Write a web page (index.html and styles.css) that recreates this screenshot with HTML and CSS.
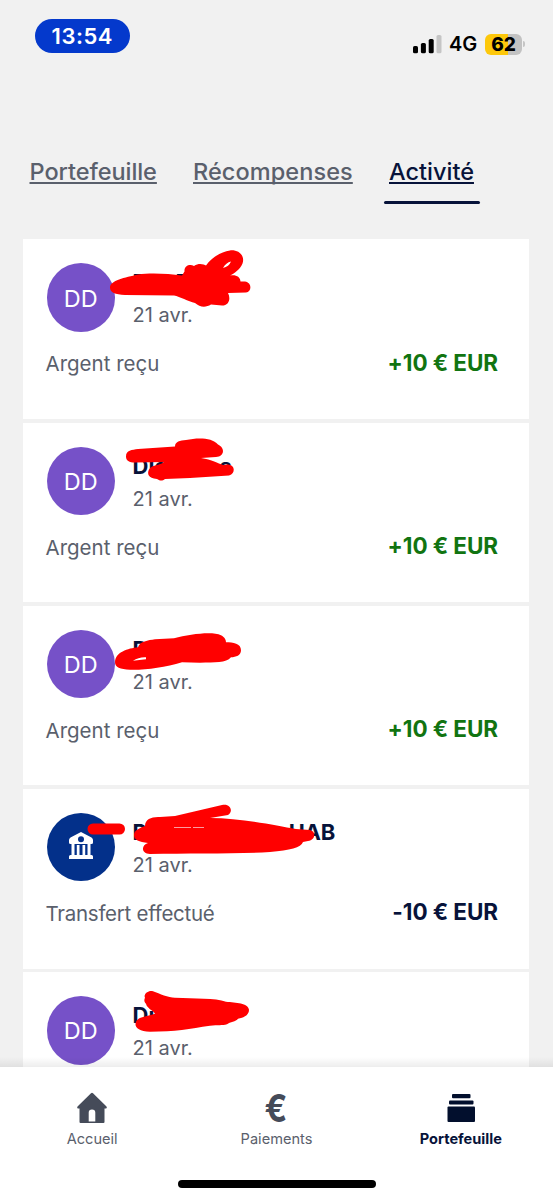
FILE: index.html
```html
<!DOCTYPE html>
<html lang="fr">
<head>
<meta charset="utf-8">
<title>Activité</title>
<link rel="stylesheet" href="styles.css">
</head>
<body>
<div class="screen">
  <header class="status">
    <div class="clock"><span>13:54</span></div>
    <div class="status-right">
      <svg class="signal" width="29" height="19" viewBox="0 0 29 19"><rect x="0" y="11" width="5" height="7.3" rx="1.6"/><rect x="7.9" y="8" width="5" height="10.3" rx="1.6"/><rect x="15.7" y="4" width="5" height="14.3" rx="1.6"/><rect x="23.5" y="0" width="5" height="18.3" rx="1.6" fill="#c5c5c5"/></svg>
      <span class="network">4G</span>
      <span class="battery">62</span><i class="battery-tip"></i>
    </div>
  </header>
  <nav class="tabs">
    <a class="tab t1">Portefeuille</a>
    <a class="tab t2">Récompenses</a>
    <a class="tab active t3">Activité</a>
  </nav>
  <main class="list">
    <article class="card">
      <div class="head"><div class="avatar">DD</div><div class="who"><div class="name"><span>D</span><span class="second">D</span></div><div class="date">21 avr.</div></div></div>
      <div class="row"><span class="label">Argent reçu</span><span class="amount plus">+10 € EUR</span></div>
      <svg class="marker" viewBox="23 239.4 506 180"><path fill-rule="evenodd" d="M110 288C110 281 125 278 138 275C150 273 168 274 182 276L184.500 272C184 266 190 264 194 266.500C199 263 204 265 206 266C210 260 220 252 230 250.800C240 250 245 257 242.500 264C240 270 234 274 230 276C236 275 240 277 240.500 282L245 282C252 283 252 292 246 293L228 293.500C231 299 229 306 222 306L211 305C206 308 200 308 195 303.500C188 302 180 297 174 296L125 295.500C115 295 110 293 110 288ZM223 268.500Q226 263 231 262Q229 267 223 268.500Z"/></svg>
    </article>
    <article class="card">
      <div class="head"><div class="avatar">DD</div><div class="who"><div class="name"><span>Die</span><span class="last">s</span></div><div class="date">21 avr.</div></div></div>
      <div class="row"><span class="label">Argent reçu</span><span class="amount plus">+10 € EUR</span></div>
      <svg class="marker" viewBox="23 422.6 506 180"><path d="M126 456C126 450 132 449.500 138 448.700L175 446C175 441 180 440 186 439.500C198 437 212 437 218 444C225 447 225 456 216 456.500L201 457.500C212 459 218 463 223 464.500L228 464C235 464 236 473 229 475L190 477.500L165 478.500C162 481 159 480 157 478.500C148 478 147 473 149 469C152 464 158 466 164 461.500L135 462C129 462 126 460 126 456Z"/></svg>
    </article>
    <article class="card">
      <div class="head"><div class="avatar">DD</div><div class="who"><div class="name">D</div><div class="date">21 avr.</div></div></div>
      <div class="row"><span class="label">Argent reçu</span><span class="amount plus">+10 € EUR</span></div>
      <svg class="marker" viewBox="23 605.8 506 180"><path fill-rule="evenodd" d="M115 662C115 652 128 648 138 647C140 641 148 640 155 639L174 638C190 634 212 631 221 635C225 637 226 640 226 642C233 642 241 643 241 650C241 655 236 657 231 657C226 663 215 662 200 662.500L182 662C165 667 145 670 130 669.500C120 669 115 667 115 662ZM133 660.500Q139 656.500 146 657L146 659Z"/></svg>
    </article>
    <article class="card">
      <div class="head"><div class="avatar bank"><svg width="24" height="28" viewBox="0 0 24 28"><path fill-rule="evenodd" d="M12 0L22.500 5.500Q24 6.500 24 8V10.500Q24 12 22.500 12H1.500Q0 12 0 10.500V8Q0 6.500 1.500 5.500ZM12 4.300A3 3 0 1 0 12 10.300A3 3 0 1 0 12 4.300Z"/><path d="M2.500 11H5.500V23H2.500ZM7.800 13H10.500V23H7.800ZM13.500 13H16.200V23H13.500ZM18.500 11H21.500V23H18.500ZM1.500 23H22.500Q24 23 24 24.500V27H0V24.500Q0 23 1.500 23Z"/></svg></div><div class="who"><div class="name"><span>P</span><span class="company">UAB</span></div><div class="date">21 avr.</div></div></div>
      <div class="row"><span class="label transfer">Transfert effectué</span><span class="amount">-10 € EUR</span></div>
      <svg class="marker" viewBox="23 789 506 180"><path d="M93 823.500H119.500A5.500 5.500 0 0 1 119.500 834.500H93A5.500 5.500 0 0 1 93 823.500ZM134 835C134 830 140 828 145 826C145 819 152 816.500 160 817L175 816L222 805C230 803 234 811 228 815L210 818C240 818 275 825 296 829L310 830C316 831 316 840 308 841L303 842C301 848 290 850 270 852C235 854 190 853 150 854C141 854 141 845 148 843C139 842 134 840 134 835Z"/><path class="sliver" d="M174 827.500H191M193 827.500H204"/></svg>
    </article>
    <article class="card">
      <div class="head"><div class="avatar">DD</div><div class="who"><div class="name">Di</div><div class="date">21 avr.</div></div></div>
      <svg class="marker" viewBox="23 972.2 506 180"><path d="M145 998C143 994 149 990 153 991.500C160 994 168 998 175 998C195 999 215 998 226 1002C236 1003 248 1003 249 1010C249 1016 243 1018 238 1019C236 1022 230 1022 227 1024.500C222 1026 218 1025 210 1026C190 1029 175 1032 150 1032C138 1031 134 1027 136 1022C138 1017 146 1017 155 1014C153 1010 147 1009 146 1004C144 1002 144 1000 145 998Z"/></svg>
    </article>
  </main>
  <footer class="bottom">
    <div class="items">
      <div class="item"><svg width="32" height="32" viewBox="0 0 32 32"><path fill-rule="evenodd" d="M15 1.200Q16 .3 17 1.200L30.500 14.500Q31.500 16.500 30 16.500H28.500V30Q28.500 31 27.500 31H4.500Q3.500 31 3.500 30V16.500H2Q.5 16.500 1.500 14.500ZM12.700 29.500H19.300V20.800A3.300 3.300 0 0 0 12.700 20.800Z"/></svg><span>Accueil</span></div>
      <div class="item"><b class="euro">€</b><span>Paiements</span></div>
      <div class="item current"><svg width="32" height="32" viewBox="0 0 32 32"><rect x="7" y="2" width="18.500" height="4.300" rx="1"/><rect x="4" y="8.500" width="24.500" height="4" rx="1"/><rect x="2.500" y="14.500" width="27.500" height="15.500" rx="1"/></svg><span>Portefeuille</span></div>
    </div>
    <div class="home-bar"></div>
  </footer>
</div>
</body>
</html>
```
FILE: styles.css
```css
* { box-sizing: border-box; }
body { margin: 0; background: #f1f1f1; font-family: Inter, "Liberation Sans", sans-serif; }
.screen { width: 553px; height: 1200px; display: flex; flex-direction: column; overflow: hidden; }
.status { height: 145px; flex: none; display: flex; justify-content: space-between; align-items: flex-start; padding: 19px 28px 0 34.5px; }
.clock { width: 95.5px; height: 34px; border-radius: 17px; background: #0439cc; color: #fff; display: flex; align-items: center; justify-content: center; font-size: 22px; font-weight: 600; line-height: 34px; letter-spacing: .5px; }
.status-right { display: flex; align-items: center; padding-top: 14px; height: 34px; margin-top: 1px; }
.signal { margin-right: 7px; }
.network { font-size: 20px; font-weight: 600; width: 30px; line-height: 22px; }
.battery { margin-left: 6px; width: 37px; height: 21px; border-radius: 6px; background: linear-gradient(90deg, #fdc80b 62%, #c2c2c2 62%); font-weight: 800; font-size: 19px; line-height: 21px; text-align: center; }
.battery-tip { width: 2px; height: 6px; background: #c5c5c5; border-radius: 0 2px 2px 0; margin-left: 1px; }
.tabs { height: 94.4px; flex: none; display: flex; align-items: flex-start; padding-left: 29.5px; }
.tab { font-size: 23.5px; font-weight: 500; line-height: 36px; padding-top: 9px; color: #5a606c; text-decoration: underline; text-decoration-thickness: 1.5px; text-underline-offset: 2px; text-decoration-skip-ink: none; white-space: nowrap; }
.t1 { width: 163.5px; letter-spacing: -.05px; }
.t2 { width: 191px; letter-spacing: .08px; }
.t3 { position: relative; width: 96px; height: 59px; padding-left: 5px; }
.active { color: #07133a; }
.t3::after { content: ""; position: absolute; left: 0; bottom: 0; width: 96px; height: 3px; border-radius: 1.5px; background: #07133a; }
.list { flex: 1; min-height: 0; overflow: hidden; padding: 0 24px 0 23px; display: flex; flex-direction: column; gap: 3.5px; }
.card { position: relative; flex: none; height: 179.7px; background: #fff; padding: 24px 31px 0 22.5px; }
.head { display: flex; }
.avatar { width: 68.5px; height: 68.5px; border-radius: 50%; margin-left: 1px; background: #7651c8; color: #fff; display: flex; align-items: center; justify-content: center; font-size: 23.5px; padding-top: 1px; }
.bank { background: #03308a; padding: 0 0 2px; }
.bank svg { fill: #fff; }
.who { padding: 5px 0 0 17.5px; }
.name { height: 29px; line-height: 29px; font-size: 22px; font-weight: 700; color: #07133a; display: flex; }
.second { margin-left: 27px; }
.last { margin-left: 52px; }
.company { margin-left: 142px; }
.date { font-size: 20px; line-height: 26px; margin-top: 5px; color: #5a606c; }
.row { display: flex; justify-content: space-between; align-items: center; margin-top: 15.5px; height: 30px; }
.label { font-size: 20.5px; color: #5a606c; padding-top: 3px; }
.transfer { letter-spacing: -.27px; }
.amount { font-size: 22.5px; font-weight: 700; letter-spacing: -.08px; color: #07133a; }
.plus { color: #117411; }
.marker { position: absolute; left: 0; top: 0; width: 506px; height: 180px; fill: #f00; }
.sliver { stroke: #fbc3c8; stroke-width: .8; fill: none; }
.bottom { position: relative; height: 133px; flex: none; background: #fff; }
.bottom::before { content: ""; position: absolute; left: 0; right: 0; top: -10px; height: 10px; background: linear-gradient(rgba(0,0,0,0), rgba(0,0,0,.07)); }
.items { display: grid; grid-template-columns: repeat(3, 1fr); padding-top: 25px; }
.item { display: flex; flex-direction: column; align-items: center; font-size: 14.6px; color: #5a606c; line-height: 20px; gap: 5px; }
.item svg { fill: #454b59; display: block; }
.euro { height: 32px; line-height: 32px; font-size: 38px; color: #454b59; font-weight: 700; transform: scaleX(.88); }
.current { color: #07133a; font-weight: 700; }
.current svg { fill: #020f2d; }
.home-bar { width: 198px; height: 8px; border-radius: 4px; background: #000; margin: 31px auto 0; }
```
